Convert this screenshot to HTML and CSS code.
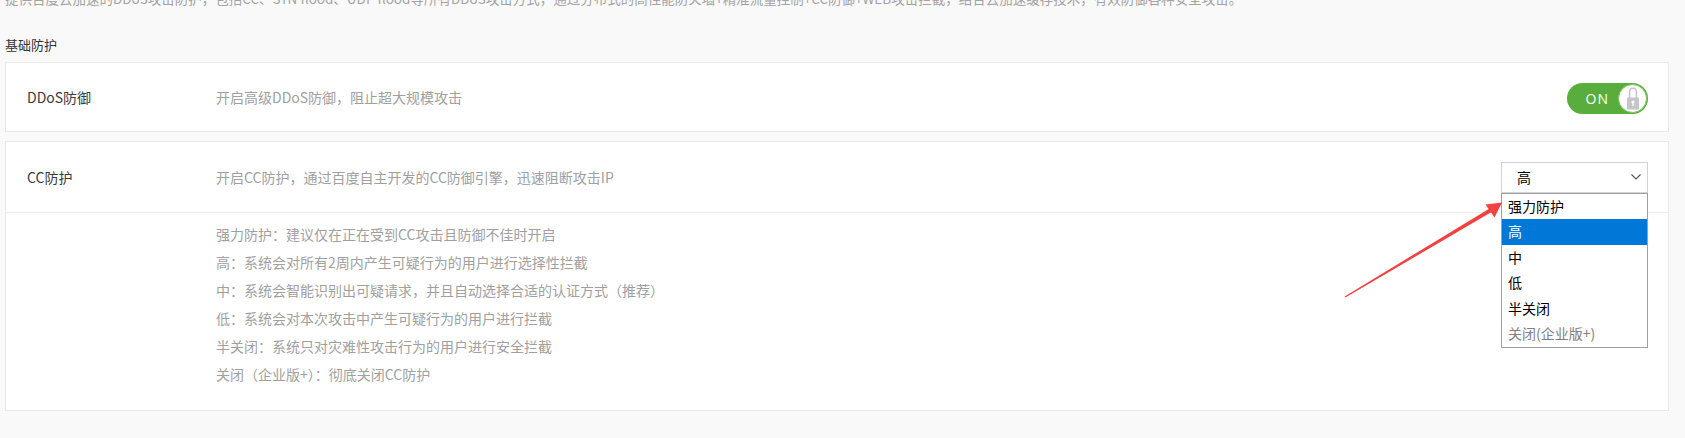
FILE: index.html
```html
<html>
<head>
<meta http-equiv="Content-Type" content="text/html; charset=utf-8" />
<title>基础防护</title>
<link rel="stylesheet" href="styles.css">
</head>
<body>
<div class="page">
	<p class="intro">提供百度云加速的DDoS攻击防护，包括CC、SYN flood、UDP flood等所有DDoS攻击方式，通过分布式的高性能防火墙+精准流量控制+CC防御+WEB攻击拦截，结合云加速缓存技术，有效防御各种安全攻击。</p>
	<h3 class="group-title">基础防护</h3>

	<div class="card">
		<div class="row">
			<div class="row-name">DDoS防御</div>
			<div class="row-desc">开启高级DDoS防御，阻止超大规模攻击</div>
			<div class="switch">
				<span class="switch-text">ON</span>
				<span class="knob">
					<svg width="12" height="23" viewBox="0 0 12 23">
						<path d="M2.6 11V4.6a3.4 3.4 0 0 1 6.8 0V11" fill="none" stroke="#c6c6c6" stroke-width="1.6"/>
						<rect x="0" y="10.5" width="12" height="12" rx="1" fill="#c6c6c6"/>
						<circle cx="6" cy="15" r="1.6" fill="#fff"/>
						<rect x="5.3" y="15" width="1.4" height="4" fill="#fff"/>
					</svg>
				</span>
			</div>
		</div>
	</div>

	<div class="card">
		<div class="row row-cc">
			<div class="row-name">CC防护</div>
			<div class="row-desc">开启CC防护，通过百度自主开发的CC防御引擎，迅速阻断攻击IP</div>
			<div class="select-wrap">
				<div class="select">
					<span>高</span>
					<svg width="10" height="6" viewBox="0 0 10 6"><path d="M0.5 0.5L5 5L9.5 0.5" fill="none" stroke="#555" stroke-width="1.1"/></svg>
				</div>
				<ul class="options">
					<li>强力防护</li>
					<li class="selected">高</li>
					<li>中</li>
					<li>低</li>
					<li>半关闭</li>
					<li class="disabled">关闭(企业版+)</li>
				</ul>
			</div>
		</div>
		<div class="levels">
			<p>强力防护：建议仅在正在受到CC攻击且防御不佳时开启</p>
			<p>高：系统会对所有2周内产生可疑行为的用户进行选择性拦截</p>
			<p>中：系统会智能识别出可疑请求，并且自动选择合适的认证方式（推荐）</p>
			<p>低：系统会对本次攻击中产生可疑行为的用户进行拦截</p>
			<p>半关闭：系统只对灾难性攻击行为的用户进行安全拦截</p>
			<p>关闭（企业版+）：彻底关闭CC防护</p>
		</div>
	</div>
</div>

<!-- annotation arrow drawn over the screenshot -->
<svg class="annot" width="1685" height="438" viewBox="0 0 1685 438">
	<polygon points="1344.6,296.4 1490,208.3 1492,211.7 1345.4,297.6" fill="#f24141"/>
	<polygon points="1502,202.5 1485.5,204.5 1494.5,217.5" fill="#f24141"/>
</svg>
</body>
</html>
```

FILE: styles.css
```css
body{
	margin:0;
	background:#f9f9f9;
	font-family:"Noto Sans CJK SC", sans-serif;
	font-size:14px;
	color:#333;
	overflow:hidden;
}
.page{
	padding:0 16px 0 5px;
}
.intro{
	margin:-12px 0 0 0;
	line-height:20px;
	font-size:13.5px;
	color:#a3a3a3;
	white-space:nowrap;
	overflow:hidden;
}
.group-title{
	margin:27px 0 7px 0;
	line-height:20px;
	font-size:13px;
	font-weight:normal;
	color:#333;
}
.card{
	background:#fff;
	border:1px solid #e9e9e9;
	margin-bottom:9px;
}
.row{
	display:flex;
	align-items:center;
	height:68px;
	padding:0 20px 0 21px;
}
.row-cc{
	height:70px;
	border-bottom:1px solid #eee;
}
.row-name{
	width:189px;
	flex-shrink:0;
	color:#3a3a3a;
}
.row-desc{
	flex:1;
	color:#a0a0a0;
}
.switch{
	display:flex;
	align-items:center;
	gap:9px;
	height:31px;
	padding:0 1px 0 19px;
	margin-top:3px;
	border-radius:16px;
	background:#59ad3c;
}
.switch-text{
	color:#fff;
	font-family:"Open Sans", sans-serif;
	font-size:14px;
	letter-spacing:1px;
}
.knob{
	display:flex;
	align-items:center;
	justify-content:center;
	width:29px;
	height:29px;
	box-sizing:border-box;
	border-radius:50%;
	background:#fff;
	border:1px solid #7cc35f;
}
.select-wrap{
	position:relative;
	width:147px;
}
.select{
	display:flex;
	align-items:center;
	justify-content:space-between;
	height:31px;
	box-sizing:border-box;
	padding:0 6px 0 15px;
	border:1px solid #d3d3d3;
	color:#000;
	font-size:14px;
}
.options{
	position:absolute;
	left:0;
	top:31px;
	width:147px;
	box-sizing:border-box;
	margin:0;
	padding:0;
	list-style:none;
	background:#fff;
	border:1px solid #a0a0a0;
	z-index:5;
}
.options li{
	height:25.5px;
	line-height:25.5px;
	padding-left:6px;
	color:#000;
	font-size:14px;
}
.options li.selected{
	background:#0078d7;
	color:#fff;
}
.options li.disabled{
	color:#808080;
}
.levels{
	padding:7px 21px 22px 210px;
}
.levels p{
	margin:0;
	line-height:28px;
	color:#a0a0a0;
}
.annot{
	position:absolute;
	left:0;
	top:0;
	pointer-events:none;
	z-index:10;
}
```
